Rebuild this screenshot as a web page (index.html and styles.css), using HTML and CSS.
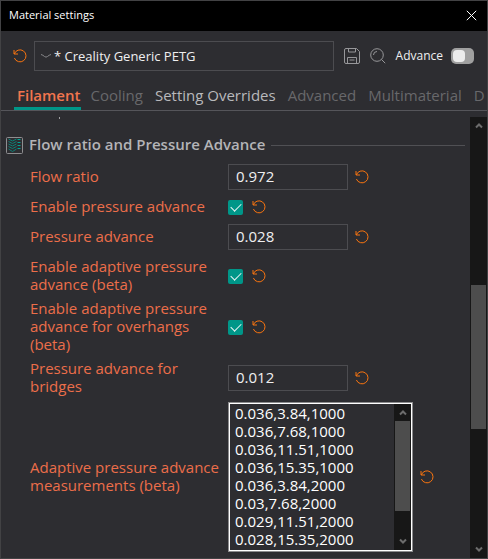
FILE: index.html
```html
<!DOCTYPE html>
<html lang="en">
<head>
<meta charset="utf-8">
<title>Material settings</title>
<link rel="stylesheet" href="styles.css">
</head>
<body>
<svg class="defs" width="0" height="0" aria-hidden="true">
  <symbol id="revert" viewBox="0 0 14 14"><path d="M1 1v4h4M1.300 5A6 6 0 1 1 1.400 9"/></symbol>
  <symbol id="up" viewBox="0 0 8 7"><path d="M1 5.500 4 2.500 7 5.500"/></symbol>
  <symbol id="down" viewBox="0 0 8 7"><path d="M1 1.500 4 4.500 7 1.500"/></symbol>
</svg>
<main class="dialog">
  <header class="titlebar">
    <h1>Material settings</h1>
    <button class="icon-button close" aria-label="Close"><svg width="11" height="11" viewBox="0 0 11 11"><path d="M.8.8l9.400 9.400M10.200.8.8 10.200"/></svg></button>
  </header>

  <div class="toolbar">
    <button class="icon-button revert" aria-label="Reset preset"><svg><use href="#revert"/></svg></button>
    <div class="preset">
      <svg class="chevron" width="12" height="6" viewBox="0 0 12 6"><path d="M1 1.500Q3 2 4.500 3.500 6 4.800 7.500 3.500 9 2 11 1.500"/></svg>
      <select aria-label="Preset"><option>* Creality Generic PETG</option></select>
    </div>
    <button class="icon-button save" aria-label="Save"><svg width="16" height="16" viewBox="0 0 16 16"><path d="M2 .5h10.500l3 3v10.500a1.500 1.500 0 0 1-1.500 1.500H2A1.500 1.500 0 0 1 .5 14V2A1.500 1.500 0 0 1 2 .5zM4.500.5v3.500h7V.5M3.500 15.500v-6h9v6M5.500 12h5"/></svg></button>
    <button class="icon-button search" aria-label="Search"><svg width="16" height="16" viewBox="0 0 16 16"><circle cx="7" cy="7" r="6.300"/><path d="M11.500 11.500l3.700 3.700M3.500 7A3.500 3.500 0 0 1 7 3.500"/></svg></button>
    <label class="advance">Advance <input class="switch" type="checkbox" role="switch"></label>
  </div>

  <nav class="tabs">
    <a class="active" href="#">Filament</a>
    <a href="#">Cooling</a>
    <a class="enabled" href="#">Setting Overrides</a>
    <a href="#">Advanced</a>
    <a href="#">Multimaterial</a>
    <a href="#">D</a>
  </nav>

  <div class="body">
    <section class="page">
      <h2>
        <svg width="17" height="17" viewBox="0 0 17 17"><rect class="frame" x=".5" y=".5" width="16" height="16" rx="1"/><path class="layers" d="M2.500 2l4 2 4-2M2.500 4.500l4 2 4-2M2.500 7l4 2 4-2M2.500 9.500l4 2 4-2M2.500 12l4 2.500 4-2.500"/><path class="ticks" d="M11.500 2.500h3M11.500 5.500h3M11.500 8.500h3M11.500 11.500h3"/></svg>
        <span>Flow ratio and Pressure Advance</span>
      </h2>

      <div class="row">
        <label for="flow">Flow ratio</label>
        <input class="field" id="flow" type="text" value="0.972">
        <button class="icon-button revert" aria-label="Reset flow ratio"><svg><use href="#revert"/></svg></button>
      </div>
      <div class="row">
        <label for="epa">Enable pressure advance</label>
        <input class="check" id="epa" type="checkbox" checked>
        <button class="icon-button revert" aria-label="Reset enable pressure advance"><svg><use href="#revert"/></svg></button>
      </div>
      <div class="row">
        <label for="pa">Pressure advance</label>
        <input class="field" id="pa" type="text" value="0.028">
        <button class="icon-button revert" aria-label="Reset pressure advance"><svg><use href="#revert"/></svg></button>
      </div>
      <div class="row two-line">
        <label for="apa">Enable adaptive pressure advance (beta)</label>
        <input class="check" id="apa" type="checkbox" checked>
        <button class="icon-button revert" aria-label="Reset adaptive pressure advance"><svg><use href="#revert"/></svg></button>
      </div>
      <div class="row three-line">
        <label for="over">Enable adaptive pressure advance for overhangs (beta)</label>
        <input class="check" id="over" type="checkbox" checked>
        <button class="icon-button revert" aria-label="Reset overhangs"><svg><use href="#revert"/></svg></button>
      </div>
      <div class="row two-line">
        <label for="bridge">Pressure advance for bridges</label>
        <input class="field" id="bridge" type="text" value="0.012">
        <button class="icon-button revert" aria-label="Reset bridges"><svg><use href="#revert"/></svg></button>
      </div>
      <div class="row">
        <label for="measure">Adaptive pressure advance measurements (beta)</label>
        <div class="editor">
          <textarea id="measure" rows="8" wrap="off">0.036,3.84,1000
0.036,7.68,1000
0.036,11.51,1000
0.036,15.35,1000
0.036,3.84,2000
0.03,7.68,2000
0.029,11.51,2000
0.028,15.35,2000</textarea>
          <div class="scrollbar inner">
            <svg><use href="#up"/></svg>
            <div class="track"><i class="lead"></i><i class="thumb"></i><i class="rest"></i></div>
            <svg><use href="#down"/></svg>
          </div>
        </div>
        <button class="icon-button revert" aria-label="Reset measurements"><svg><use href="#revert"/></svg></button>
      </div>
    </section>
    <div class="scrollbar outer">
      <svg><use href="#up"/></svg>
      <div class="track"><i class="lead"></i><i class="thumb"></i><i class="rest"></i></div>
      <svg><use href="#down"/></svg>
    </div>
  </div>
</main>
</body>
</html>
```
FILE: styles.css
```css
* { box-sizing: border-box; }

body {
  margin: 0;
  background: #2d2d31;
  color: #efeff0;
  font: 15px/18px "Open Sans", sans-serif;
}

svg { fill: none; stroke: currentColor; display: block; }
.defs { position: absolute; }
h1, h2 { margin: 0; }
input, select, textarea, button { font: inherit; color: inherit; }

.dialog {
  display: flex;
  flex-direction: column;
  min-height: 100vh;
  border: 1px solid #424244;
  overflow: hidden;
}

.icon-button {
  flex: none;
  padding: 0;
  border: 0;
  background: none;
}
.revert { color: #f87410; }
.revert svg { width: 14px; height: 14px; }

.titlebar {
  display: flex;
  align-items: center;
  justify-content: space-between;
  height: 30px;
  padding: 0 10px 2px 8px;
  background: #000;
}
.titlebar h1 { font-size: 11px; font-weight: 400; color: #fff; }
.close { color: #fff; }

.toolbar {
  display: flex;
  align-items: center;
  height: 50px;
  padding: 0 13px 0 12px;
}
.preset {
  display: flex;
  align-items: center;
  flex: 1;
  height: 30px;
  margin: 0 10px 0 7px;
  padding-left: 5px;
  border: 1px solid #4c4c50;
}
.chevron { color: #87878a; }
.preset select {
  appearance: none;
  flex: 1;
  min-width: 0;
  padding: 0 2px;
  border: 0;
  background: none;
  font-size: 13px;
}
.save, .search { color: #97979a; }
.save { margin-right: 10px; }
.advance {
  display: flex;
  align-items: center;
  gap: 8px;
  margin-left: 10px;
  font-size: 12px;
}
.switch {
  appearance: none;
  display: flex;
  width: 23px;
  height: 16px;
  margin: 0;
  padding: 2px;
  border-radius: 5px;
  background: #a0a0a0;
}
.switch::before {
  content: "";
  width: 12px;
  border-radius: 4px;
  background: #ececec;
}

.tabs {
  display: flex;
  gap: 6px;
  height: 30px;
  padding-left: 13px;
  border-bottom: 1px solid #55555a;
  white-space: nowrap;
}
.tabs a {
  padding: 5px 3px 0;
  color: #68686b;
  text-decoration: none;
  border-bottom: 3px solid transparent;
}
.tabs .enabled { color: #b9b9bc; }
.tabs .active {
  padding-right: 1px;
  color: #f2754e;
  font-weight: 600;
  border-bottom-color: #009688;
}

.body { display: flex; flex: 1; }
.page { position: relative; flex: 1; padding: 25px 5px 6px; }
.page::before {
  content: "";
  position: absolute;
  top: 6px;
  left: 58px;
  width: 1px;
  height: 2px;
  background: #a0a0a2;
}

h2 {
  display: flex;
  align-items: center;
  gap: 6px;
  height: 18px;
  margin-bottom: 8px;
  font-size: 15px;
  font-weight: 600;
  color: #b4b4b7;
}
h2 span { padding-bottom: 2px; }
h2::after { content: ""; flex: 1; height: 1px; background: #505054; }
.frame { stroke: #8e8e90; }
.layers { stroke: #0c7f75; }
.ticks { stroke: #00a394; }

.row {
  display: flex;
  align-items: center;
  min-height: 30px;
  padding-left: 24px;
}
.two-line { min-height: 48px; }
.three-line { min-height: 54px; }
.row label { width: 190px; margin: -2px 8px 0 0; color: #ec6e4a; }

.field {
  width: 120px;
  height: 26px;
  margin: 0 7px 0 0;
  padding: 0 7px 2px;
  border: 1px solid #4c4c50;
  background: none;
}
.check {
  appearance: none;
  display: flex;
  align-items: center;
  justify-content: center;
  width: 15px;
  height: 15px;
  margin: 0 9px 0 0;
  border-radius: 2px;
  background: #009688;
}
.check:checked::before {
  content: "";
  width: 9px;
  height: 5px;
  margin-bottom: 2px;
  border: solid #e8f4f3;
  border-width: 0 0 1px 1px;
  transform: rotate(-45deg);
}

.editor {
  display: flex;
  width: 185px;
  height: 150px;
  margin-right: 7px;
  border: 1px solid #8c8c8e;
  outline: 1px solid #fff;
  outline-offset: -2px;
  padding: 1px;
}
textarea {
  flex: 1;
  min-width: 0;
  padding: 0 5px;
  border: 0;
  outline: 0;
  background: none;
  color: #fff;
  resize: none;
  overflow: hidden;
}

.scrollbar {
  display: flex;
  flex-direction: column;
  align-items: center;
  width: 17px;
  background: #171717;
  color: #6c6c6c;
}
.scrollbar svg { width: 8px; height: 7px; margin: 5px 0; stroke-width: 2; }
.track { display: flex; flex-direction: column; flex: 1; width: 15px; }
.thumb { background: #4d4d4d; }
.outer { margin-top: 6px; }
.outer .lead { flex: 151; }
.outer .thumb { flex: 144; }
.outer .rest { flex: 112; }
.inner .thumb { flex: 90; }
.inner .rest { flex: 22; }
```
